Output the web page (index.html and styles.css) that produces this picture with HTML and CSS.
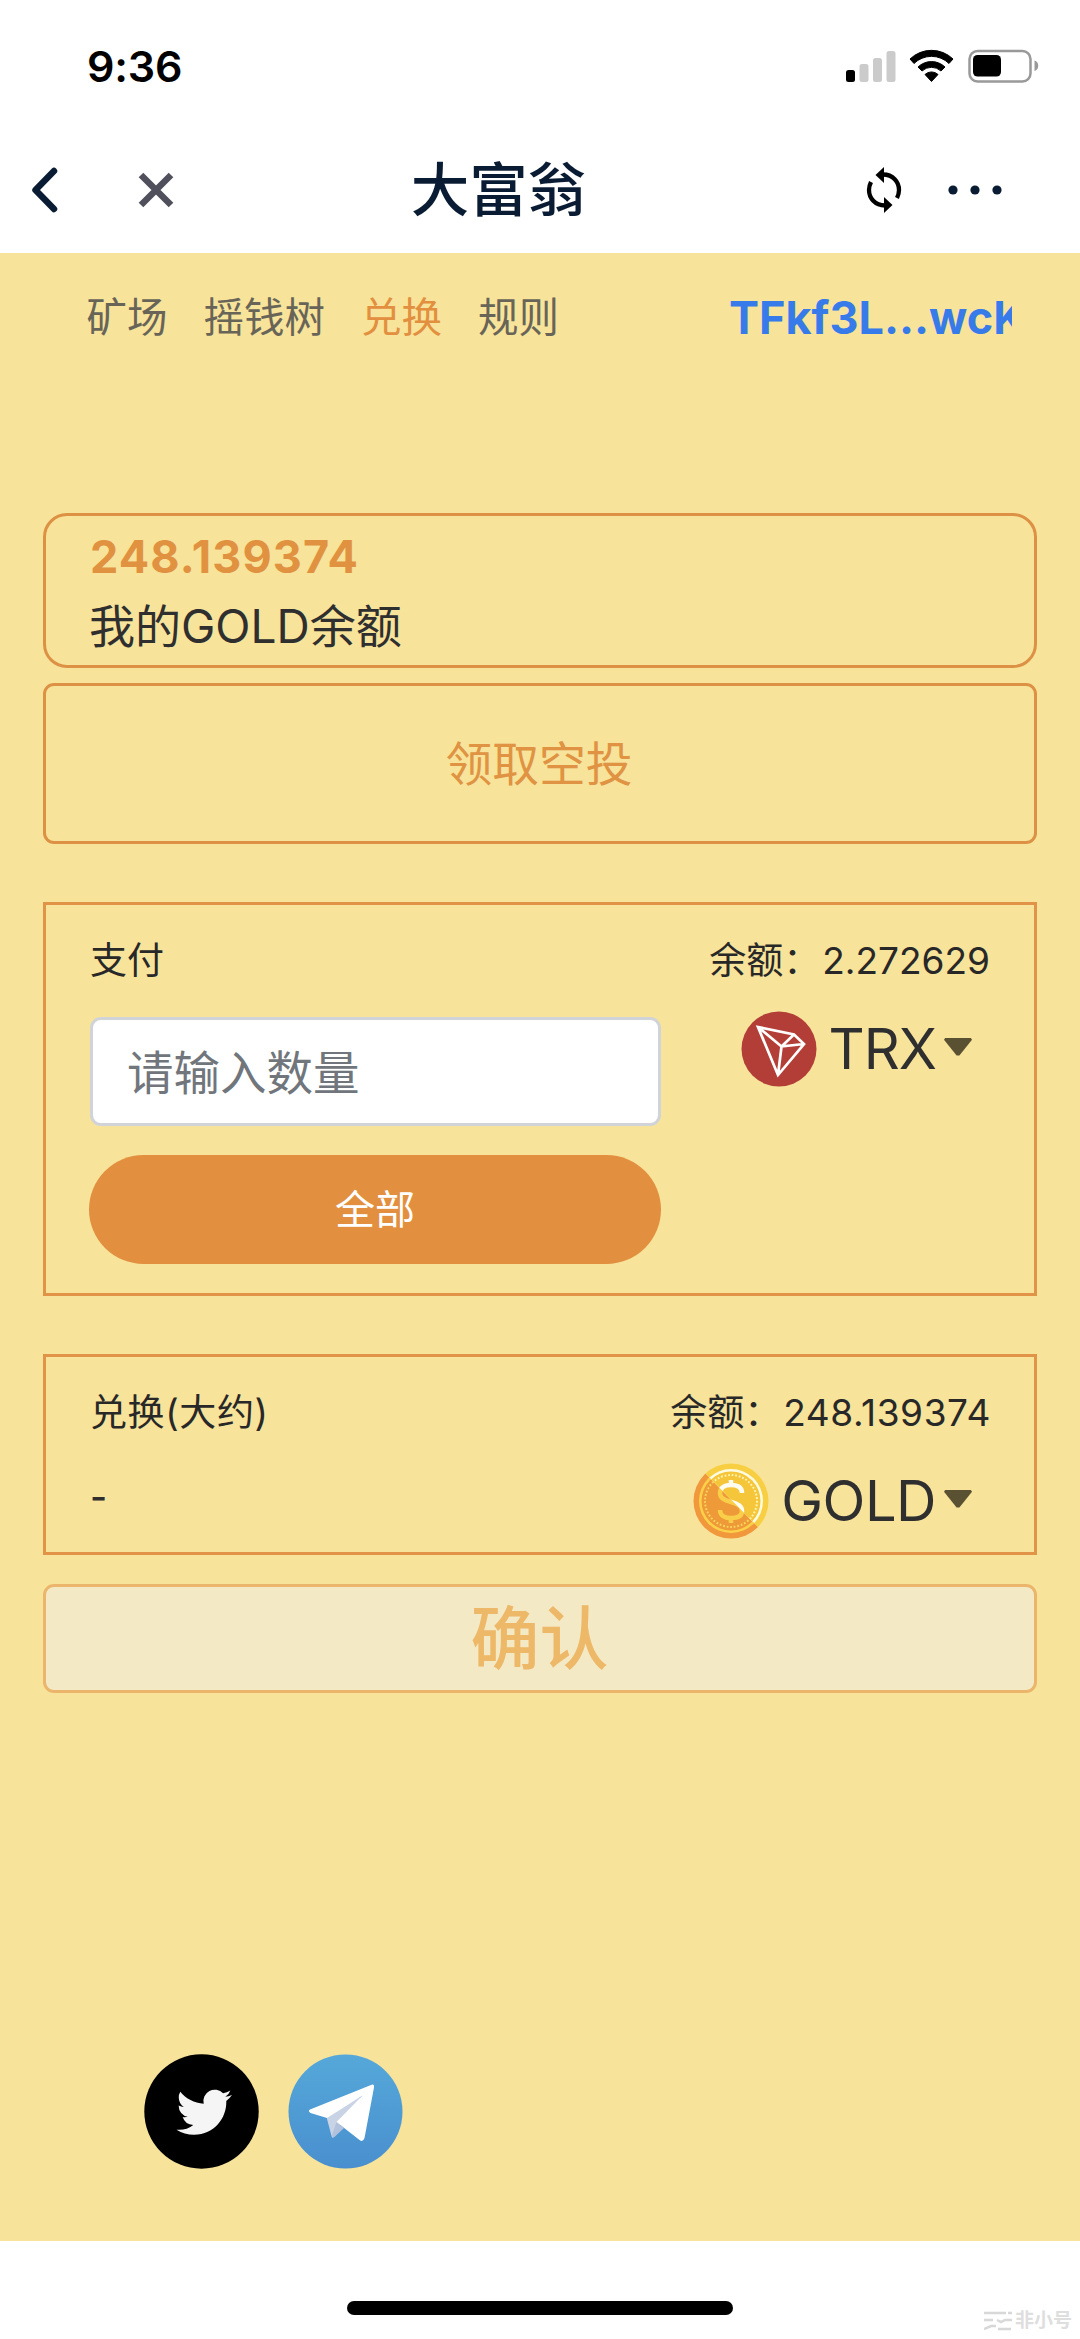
FILE: index.html
```html
<!DOCTYPE html>
<html lang="zh-CN">
<head>
<meta charset="utf-8">
<meta name="viewport" content="width=device-width">
<title>大富翁</title>
<link rel="stylesheet" href="styles.css">
</head>
<body>
<header class="status">
  <time class="clock">9:36</time>
  <svg class="status-icons" viewBox="0 0 194 34" width="194" height="34">
    <rect x="0" y="21" width="9" height="12" rx="2.5" fill="#000"/>
    <g fill="#cbcbcb"><rect x="13.500" y="15" width="9" height="18" rx="2.500"/><rect x="27" y="9" width="9" height="24" rx="2.500"/><rect x="40.500" y="2" width="9" height="31" rx="2.500"/></g>
    <path d="M64 10A31 31 0 0 1 107 10L103 14.500A25 25 0 0 0 68 14.500ZM72 18A19.500 19.500 0 0 1 99 18L95 22A14 14 0 0 0 76 22ZM79 25.500A9.500 9.500 0 0 1 92 25.500L85.500 32.500Z" fill="#000" stroke="#000" stroke-width="1" stroke-linejoin="round"/>
    <rect x="123.500" y="2" width="61" height="30.500" rx="8" fill="none" stroke="#999" stroke-width="2.500"/>
    <rect x="127" y="6" width="28" height="21.500" rx="4.500" fill="#000"/>
    <path d="M188.500 11.500C193.500 13 193.500 20.500 188.500 22Z" fill="#999"/>
  </svg>
</header>
<div class="titlebar">
  <div class="title-left">
    <svg width="30" height="48" viewBox="0 0 30 48"><path d="M25 5L6.500 24L25 43" fill="none" stroke="#0a1c33" stroke-width="6.500" stroke-linecap="round" stroke-linejoin="round"/></svg>
    <svg width="38" height="38" viewBox="0 0 38 38"><path d="M4 4L34 34M34 4L4 34" stroke="#50505d" stroke-width="6.500"/></svg>
  </div>
  <h1>大富翁</h1>
  <div class="title-right">
    <svg width="36" height="48" viewBox="0 0 36 48"><path d="M17 8.500C27 8.500 33 16 33 24Q33 28 31 32M19 39.500C9 39.500 3 32 3 24Q3 20 5 16" fill="none" stroke="#000" stroke-width="4.300"/><path d="M18 1V17L9.500 9ZM18 31V47L26.500 39Z"/></svg>
    <svg width="56" height="12" viewBox="0 0 56 12" fill="#0a1c33"><circle cx="6" cy="6" r="4.600"/><circle cx="28" cy="6" r="4.600"/><circle cx="50" cy="6" r="4.600"/></svg>
  </div>
</div>
<main>
  <nav>
    <a>矿场</a><a>摇钱树</a><a class="active">兑换</a><a>规则</a>
    <span class="address">TFkf3L...wcK</span>
  </nav>
  <section class="balance"><strong>248.139374</strong><span>我的GOLD余额</span></section>
  <button class="airdrop">领取空投</button>
  <section class="panel pay">
    <div class="row"><span>支付</span><span>余额：<span class="num">2.272629</span></span></div>
    <div class="pay-grid">
      <div class="fields">
        <input type="text" placeholder="请输入数量">
        <button class="all">全部</button>
      </div>
      <div class="token">
        <svg width="76" height="76" viewBox="0 0 76 76"><circle cx="38" cy="38" r="37.500" fill="#b33d37"/><path d="M17 16L53 23.500L63 33L37 64ZM17 16L40.500 35.500L53 23.500M63 33L40.500 35.500L37 64" fill="none" stroke="#fff" stroke-width="2.700" stroke-linejoin="miter"/></svg>
        <span>TRX</span><i class="caret"></i>
      </div>
    </div>
  </section>
  <section class="panel receive">
    <div class="row"><span class="about">兑换(大约)</span><span>余额：<span class="num">248.139374</span></span></div>
    <div class="receive-row">
      <span class="dash">-</span>
      <div class="token">
        <svg width="76" height="76" viewBox="0 0 76 76">
          <defs>
            <clipPath id="light"><path d="M10 8L66 65L76 60V0H10Z"/></clipPath>
            <clipPath id="dark"><path d="M10 8L66 65L60 76H0V8Z"/></clipPath>
          </defs>
          <g clip-path="url(#dark)"><circle cx="38" cy="38" r="37.500" fill="#f0983b"/><circle cx="38" cy="38" r="32" fill="#fbd14a"/><circle cx="38" cy="38" r="29.500" fill="#ee9a38"/><circle cx="38" cy="38" r="26" fill="none" stroke="#f9d55a" stroke-width="2" stroke-dasharray="1.800 1.800"/></g>
          <g clip-path="url(#light)"><circle cx="38" cy="38" r="37.500" fill="#f8cf42"/><circle cx="38" cy="38" r="32" fill="#fffbe0"/><circle cx="38" cy="38" r="29.500" fill="#f5c53a"/><circle cx="38" cy="38" r="26" fill="none" stroke="#fff3ae" stroke-width="2" stroke-dasharray="1.800 1.800"/></g>
          <g fill="none" stroke-width="4.500"><path clip-path="url(#dark)" stroke="#f9ce48" d="M49 30C49 24 44 22 38 22C30 22 27 26 27 30C27 35 31 37 38 39C45 41 49 43 49 48C49 53 45 55 38 55C31 55 27 52 27 47M38 17V23M38 54V60"/><path clip-path="url(#light)" stroke="#fffdf0" d="M49 30C49 24 44 22 38 22C30 22 27 26 27 30C27 35 31 37 38 39C45 41 49 43 49 48C49 53 45 55 38 55C31 55 27 52 27 47M38 17V23M38 54V60"/></g>
        </svg>
        <span>GOLD</span><i class="caret"></i>
      </div>
    </div>
  </section>
  <button class="confirm" disabled>确认</button>
  <div class="social">
    <svg width="115" height="115" viewBox="0 0 115 115"><circle cx="57.500" cy="57.500" r="57.200"/><path transform="translate(32.500 30.500) scale(2.310)" fill="#f5f5f5" d="M23.953 4.570a10 10 0 01-2.825.775 4.958 4.958 0 002.163-2.723c-.951.555-2.005.959-3.127 1.184a4.920 4.920 0 00-8.384 4.482C7.690 8.095 4.067 6.130 1.640 3.162a4.822 4.822 0 00-.666 2.475c0 1.710.870 3.213 2.188 4.096a4.904 4.904 0 01-2.228-.616v.060a4.923 4.923 0 003.946 4.827 4.996 4.996 0 01-2.212.085 4.936 4.936 0 004.604 3.417 9.867 9.867 0 01-6.102 2.105c-.390 0-.779-.023-1.170-.067a13.995 13.995 0 007.557 2.209c9.053 0 13.998-7.496 13.998-13.985 0-.210 0-.420-.015-.630A9.935 9.935 0 0024 4.590z"/></svg>
    <svg width="115" height="115" viewBox="0 0 115 115"><defs><linearGradient id="sky" x2="0" y2="1"><stop stop-color="#55a8d9"/><stop offset="1" stop-color="#498fcf"/></linearGradient></defs><circle cx="57.500" cy="57.500" r="57" fill="url(#sky)"/><path d="M38 61L74 42L54 67L46 83Q44 85 43.500 82Z" fill="#c9d3e6"/><path d="M22 55.500L83 31Q86.500 29.500 86 33.500L76.500 84Q75 88.500 71.500 86L48.500 68L74.500 41.500L39 64L22.500 59Q19.500 57 22 55.500Z" fill="#fff"/><path d="M48.500 68L56 74L47 82.500Q44.500 84.500 44 81Z" fill="#b3c2dc"/></svg>
  </div>
</main>
<footer>
  <div class="home"></div>
  <div class="mark"><svg width="28" height="20" viewBox="0 0 28 20" fill="none" stroke="#d8d8d8" stroke-width="2.500"><path d="M0 2H22M24 2H28M0 9H9M13 9L17 11L21 9H28M0 18L7 15H12M14 18H27"/></svg><span>非小号</span></div>
</footer>
</body>
</html>
```
FILE: styles.css
```css
* { box-sizing: border-box; }
body {
  margin: 0;
  width: 1080px;
  height: 2339px;
  display: flex;
  flex-direction: column;
  overflow: hidden;
  background: #fff;
  color: #2f2f2f;
  font-family: Inter, "Noto Sans CJK SC", sans-serif;
}
svg { display: block; flex: none; }
button { font-family: inherit; padding: 0; display: block; }
.status {
  height: 128px;
  flex: none;
  display: flex;
  justify-content: space-between;
  align-items: flex-start;
  padding: 39px 40px 0 87px;
}
.clock { font-size: 43px; line-height: 54px; font-weight: 600; color: #000; letter-spacing: -0.2px; }
.status-icons { margin-top: 10px; }
.titlebar {
  height: 125px;
  flex: none;
  display: grid;
  grid-template-columns: 1fr auto 1fr;
  align-items: center;
  padding: 0 77px 2px 29px;
}
.title-left { display: flex; align-items: center; gap: 78px; }
.title-right { display: flex; align-items: center; justify-content: flex-end; gap: 45px; }
h1 { margin: 0 35px 0 0; font-size: 58.5px; line-height: 70px; font-weight: 500; color: #0a1c33; }
main { height: 1988px; flex: none; background: #f7e39a; padding: 0 43px; }
nav {
  height: 260px;
  padding: 35px 25px 0 43.5px;
  display: flex;
  align-items: flex-start;
  gap: 36px;
  font-size: 40.5px;
  line-height: 60px;
  color: #686558;
}
.active { color: #e2903f; }
.address { margin-left: auto; width: 283px; overflow: hidden; white-space: nowrap; font-size: 45px; font-weight: 700; color: #367be9; }
.balance {
  height: 155px;
  border: 3px solid #dc9145;
  border-radius: 24px;
  padding: 13px 44px;
  display: flex;
  flex-direction: column;
  font-size: 46px;
}
.balance strong { font-weight: 700; line-height: 56px; color: #e19240; font-size: 45px; letter-spacing: 1.1px; }
.balance span { line-height: 56px; margin-top: 13px; margin-left: -1px; }
.airdrop {
  width: 100%;
  height: 161px;
  margin-top: 15px;
  border: 3px solid #dc9145;
  border-radius: 11px;
  padding: 0 2px 6px 0;
  background: none;
  color: #e09342;
  font-size: 46.8px;
}
.panel { border: 3px solid #e19347; }
.pay { height: 394px; margin-top: 58px; padding: 28px 44px; }
.row { display: flex; justify-content: space-between; white-space: nowrap; font-size: 37px; line-height: 56px; color: #282828; }
.about { letter-spacing: 0.6px; }
.num { margin-left: 2px; }
.receive .num { letter-spacing: 0.6px; margin-right: -1px; }
.pay-grid { display: flex; justify-content: space-between; margin-top: 28px; }
.fields { display: flex; flex-direction: column; gap: 29px; width: 571px; }
input {
  width: 571px;
  height: 109px;
  margin: 0;
  padding: 2px 34px 0;
  border: 3px solid #d0d3d8;
  border-radius: 11px;
  background: #fff;
  font: 46.500px Inter, "Noto Sans CJK SC", sans-serif;
}
input::placeholder { color: #70767c; opacity: 1; }
.all { width: 572px; height: 109px; margin-left: -1px; padding-bottom: 5px; border: 0; border-radius: 55px; background: #e2903f; color: #fff; font-size: 40px; }
.token { display: flex; align-items: center; height: 76px; font-size: 56px; padding-right: 18px; }
.pay .token { margin-top: -6px; }
.token span { margin-left: 12px; line-height: 76px; letter-spacing: -1px; }
.receive .token span { letter-spacing: -0.5px; }
.caret { width: 28px; height: 18px; margin: -4px 0 0 8px; background: #5a5133; clip-path: polygon(4% 0, 96% 0, 100% 10%, 55% 97%, 45% 97%, 0 10%); }
.receive { height: 201px; margin-top: 58px; padding: 28px 44px; }
.receive-row { display: flex; justify-content: space-between; height: 76px; margin-top: 22px; }
.dash { font-size: 37px; line-height: 67px; font-weight: 500; }
.confirm {
  width: 100%;
  height: 109px;
  margin-top: 29px;
  border: 3px solid #ebb66c;
  border-radius: 11px;
  padding-right: 1px;
  background: #f3e9c5;
  color: #edb868;
  font-size: 69px;
  line-height: 90px;
  font-weight: 500;
}
.social { display: flex; gap: 29px; margin: 361px 0 0 101px; }
footer { flex: 1; position: relative; background: #fff; }
.home { width: 386px; height: 14px; margin: 60px auto 0; border-radius: 7px; background: #000; }
.mark { position: absolute; right: 8px; bottom: 6px; display: flex; align-items: center; gap: 3px; font-size: 19px; line-height: 24px; font-weight: 700; color: #dedede; }
```
